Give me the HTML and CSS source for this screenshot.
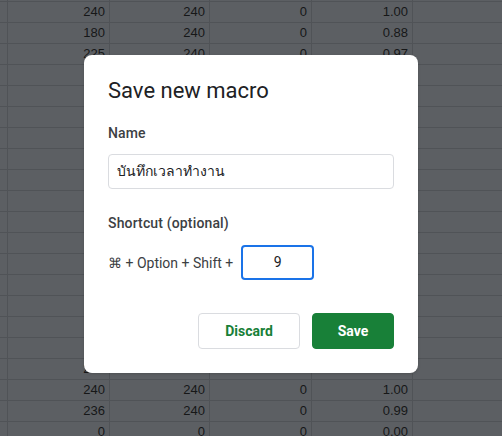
FILE: index.html
```html
<!DOCTYPE html>
<html>
<head>
<meta charset="utf-8">
<link rel="stylesheet" href="styles.css">
</head>
<body>
<div class="sheet">
  <div class="row"><div class="c c0"></div><div class="c"></div><div class="c"></div><div class="c"></div><div class="c"></div><div class="c c5"></div></div>
  <div class="row"><div class="c c0"></div><div class="c">240</div><div class="c">240</div><div class="c">0</div><div class="c">1.00</div><div class="c c5"></div></div>
  <div class="row"><div class="c c0"></div><div class="c">180</div><div class="c">240</div><div class="c">0</div><div class="c">0.88</div><div class="c c5"></div></div>
  <div class="row"><div class="c c0"></div><div class="c">225</div><div class="c">240</div><div class="c">0</div><div class="c">0.97</div><div class="c c5"></div></div>
  <div class="row"><div class="c c0"></div><div class="c"></div><div class="c"></div><div class="c"></div><div class="c"></div><div class="c c5"></div></div>
  <div class="row"><div class="c c0"></div><div class="c"></div><div class="c"></div><div class="c"></div><div class="c"></div><div class="c c5"></div></div>
  <div class="row"><div class="c c0"></div><div class="c"></div><div class="c"></div><div class="c"></div><div class="c"></div><div class="c c5"></div></div>
  <div class="row"><div class="c c0"></div><div class="c"></div><div class="c"></div><div class="c"></div><div class="c"></div><div class="c c5"></div></div>
  <div class="row"><div class="c c0"></div><div class="c"></div><div class="c"></div><div class="c"></div><div class="c"></div><div class="c c5"></div></div>
  <div class="row"><div class="c c0"></div><div class="c"></div><div class="c"></div><div class="c"></div><div class="c"></div><div class="c c5"></div></div>
  <div class="row"><div class="c c0"></div><div class="c"></div><div class="c"></div><div class="c"></div><div class="c"></div><div class="c c5"></div></div>
  <div class="row"><div class="c c0"></div><div class="c"></div><div class="c"></div><div class="c"></div><div class="c"></div><div class="c c5"></div></div>
  <div class="row"><div class="c c0"></div><div class="c"></div><div class="c"></div><div class="c"></div><div class="c"></div><div class="c c5"></div></div>
  <div class="row"><div class="c c0"></div><div class="c"></div><div class="c"></div><div class="c"></div><div class="c"></div><div class="c c5"></div></div>
  <div class="row"><div class="c c0"></div><div class="c"></div><div class="c"></div><div class="c"></div><div class="c"></div><div class="c c5"></div></div>
  <div class="row"><div class="c c0"></div><div class="c"></div><div class="c"></div><div class="c"></div><div class="c"></div><div class="c c5"></div></div>
  <div class="row"><div class="c c0"></div><div class="c"></div><div class="c"></div><div class="c"></div><div class="c"></div><div class="c c5"></div></div>
  <div class="row"><div class="c c0"></div><div class="c"></div><div class="c"></div><div class="c"></div><div class="c"></div><div class="c c5"></div></div>
  <div class="row"><div class="c c0"></div><div class="c">235</div><div class="c">240</div><div class="c">240</div><div class="c">0.98</div><div class="c c5"></div></div>
  <div class="row"><div class="c c0"></div><div class="c">240</div><div class="c">240</div><div class="c">0</div><div class="c">1.00</div><div class="c c5"></div></div>
  <div class="row"><div class="c c0"></div><div class="c">236</div><div class="c">240</div><div class="c">0</div><div class="c">0.99</div><div class="c c5"></div></div>
  <div class="row"><div class="c c0"></div><div class="c">0</div><div class="c">0</div><div class="c">0</div><div class="c">0.00</div><div class="c c5"></div></div>
</div>

<div class="overlay">
  <div class="dialog">
    <h1 class="title">Save new macro</h1>
    <div class="label">Name</div>
    <div class="field">บันทึกเวลาทำงาน</div>
    <div class="label label-shortcut">Shortcut (optional)</div>
    <div class="shortcut">
      <span class="keys">⌘ + Option + Shift +</span>
      <div class="keybox">9</div>
    </div>
    <div class="actions">
      <button class="btn btn-discard">Discard</button>
      <button class="btn btn-save">Save</button>
    </div>
  </div>
</div>
</body>
</html>
```

FILE: styles.css
```css
* { box-sizing: border-box; }
html, body {
  margin: 0;
  padding: 0;
  width: 502px;
  height: 436px;
  overflow: hidden;
  background: #5c5f63;
}
.sheet {
  margin-top: -19px;
  font-family: "Liberation Sans", Arial, sans-serif;
  font-size: 13px;
  color: #161718;
}
.row {
  display: grid;
  grid-template-columns: 8px 102px 100px 102px 101px 1fr;
  height: 21px;
}
.c {
  border-right: 1px solid #505357;
  border-bottom: 1px solid #505357;
  text-align: right;
  padding-right: 4px;
  line-height: 20px;
  white-space: nowrap;
  overflow: hidden;
}
.c5 { border-right: none; }

.overlay {
  position: absolute;
  inset: 0;
  display: flex;
  justify-content: center;
  align-items: flex-start;
  padding-top: 55px;
}
.dialog {
  width: 334px;
  height: 318px;
  background: #fff;
  border-radius: 8px;
  padding: 22px 24px 24px;
  display: flex;
  flex-direction: column;
  font-family: Roboto, "Noto Sans", sans-serif;
  color: #3c4043;
  box-shadow: 0 1px 3px rgba(0,0,0,0.15);
}
.title {
  margin: 0;
  font-size: 22px;
  line-height: 28px;
  font-weight: 400;
  color: #202124;
}
.label {
  margin-top: 18px;
  font-size: 14px;
  line-height: 20px;
  font-weight: 500;
  color: #3c4043;
  letter-spacing: 0.15px;
}
.field {
  margin-top: 11px;
  height: 35px;
  border: 1px solid #dadce0;
  border-radius: 4px;
  padding: 0 8px;
  font-size: 14px;
  line-height: 33px;
  color: #202124;
}
.label-shortcut { margin-top: 24px; }
.shortcut {
  margin-top: 12px;
  display: flex;
  align-items: center;
  gap: 8px;
}
.keys {
  font-size: 14px;
  color: #3c4043;
}
.keybox {
  width: 73px;
  height: 35px;
  border: 2px solid #1a73e8;
  border-radius: 4px;
  text-align: center;
  font-size: 14px;
  line-height: 31px;
  color: #202124;
}
.actions {
  margin-top: auto;
  display: flex;
  justify-content: flex-end;
  gap: 12px;
}
.btn {
  height: 36px;
  border-radius: 4px;
  font-family: Roboto, sans-serif;
  font-size: 14px;
  font-weight: 700;
  padding: 0;
  cursor: pointer;
}
.btn-discard {
  width: 102px;
  background: #fff;
  border: 1px solid #dadce0;
  color: #188038;
}
.btn-save {
  width: 82px;
  background: #188038;
  border: 1px solid #188038;
  color: #fff;
}
```
